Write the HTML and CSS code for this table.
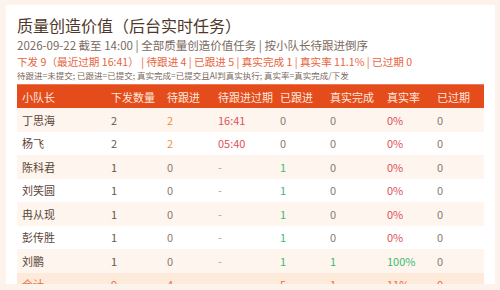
FILE: index.html
```html
<!DOCTYPE html>
<html lang="zh">
<head>
<meta charset="utf-8">
<link rel="stylesheet" href="styles.css">
</head>
<body>
<div class="card">
  <h1 class="title">质量创造价值（后台实时任务）</h1>
  <div class="meta">2026-09-22 截至 14:00 | 全部质量创造价值任务 | 按小队长待跟进倒序</div>
  <div class="summary">下发 9（最近过期 16:41） | 待跟进 4 | 已跟进 5 | 真实完成 1 | 真实率 11.1% | 已过期 0</div>
  <div class="legend">待跟进=未提交; 已跟进=已提交; 真实完成=已提交且AI判真实执行; 真实率=真实完成/下发</div>
  <table class="grid">
    <colgroup>
      <col class="c1"><col class="c2"><col class="c3"><col class="c4"><col class="c5"><col class="c6"><col class="c7"><col class="c8">
    </colgroup>
    <thead>
      <tr><th>小队长</th><th>下发数量</th><th>待跟进</th><th>待跟进过期</th><th>已跟进</th><th>真实完成</th><th>真实率</th><th>已过期</th></tr>
    </thead>
    <tbody>
      <tr><td class="name">丁思海</td><td>2</td><td class="warn">2</td><td class="red">16:41</td><td class="muted">0</td><td class="muted">0</td><td class="red">0%</td><td class="muted">0</td></tr>
      <tr><td class="name">杨飞</td><td>2</td><td class="warn">2</td><td class="red">05:40</td><td class="muted">0</td><td class="muted">0</td><td class="red">0%</td><td class="muted">0</td></tr>
      <tr><td class="name">陈科君</td><td>1</td><td class="muted">0</td><td class="dash">-</td><td class="green">1</td><td class="muted">0</td><td class="red">0%</td><td class="muted">0</td></tr>
      <tr><td class="name">刘笑圆</td><td>1</td><td class="muted">0</td><td class="dash">-</td><td class="green">1</td><td class="muted">0</td><td class="red">0%</td><td class="muted">0</td></tr>
      <tr><td class="name">冉从现</td><td>1</td><td class="muted">0</td><td class="dash">-</td><td class="green">1</td><td class="muted">0</td><td class="red">0%</td><td class="muted">0</td></tr>
      <tr><td class="name">彭传胜</td><td>1</td><td class="muted">0</td><td class="dash">-</td><td class="green">1</td><td class="muted">0</td><td class="red">0%</td><td class="muted">0</td></tr>
      <tr><td class="name">刘鹏</td><td>1</td><td class="muted">0</td><td class="dash">-</td><td class="green">1</td><td class="green">1</td><td class="green">100%</td><td class="muted">0</td></tr>
      <tr class="total"><td>合计</td><td>9</td><td>4</td><td class="dash">-</td><td>5</td><td>1</td><td>11%</td><td>0</td></tr>
    </tbody>
  </table>
</div>
</body>
</html>
```

FILE: styles.css
```css
html, body {
  margin: 0;
  padding: 0;
}
body {
  background: #fcf3ec;
  padding: 5px 5px 0 6px;
  font-family: "Noto Sans CJK SC", "DejaVu Sans", sans-serif;
  color: #5b4538;
}
.card {
  background: #ffffff;
  height: 279px;
  padding: 9px 12px 0 11px;
  box-sizing: border-box;
}
.title {
  margin: 0;
  font-weight: 400;
  font-size: 16px;
  line-height: 22px;
  color: #4f382b;
}
.meta {
  margin-top: 1px;
  font-size: 11.5px;
  line-height: 16px;
  color: #7b6a60;
}
.summary {
  margin-top: 1px;
  font-size: 10.6px;
  line-height: 16px;
  color: #e8643e;
}
.legend {
  font-size: 8.5px;
  line-height: 10px;
  color: #7b6a60;
}
.grid {
  margin-top: 4px;
  width: 100%;
  border-collapse: collapse;
  table-layout: fixed;
  font-size: 11px;
  line-height: 14px;
}
.c1 { width: 89px; }
.c2 { width: 56px; }
.c3 { width: 51px; }
.c4 { width: 62px; }
.c5 { width: 50px; }
.c6 { width: 57px; }
.c7 { width: 50px; }
.c8 { width: 52px; }
.grid th {
  background: #e44c1c;
  color: #fde9df;
  font-weight: 400;
  text-align: left;
  height: 23px;
  padding: 0 0 0 5px;
  border-top: 1px solid #ef7a55;
}
.grid td {
  height: 23.5px;
  padding: 0 0 0 5px;
  color: #6a5548;
}
.grid tbody tr:nth-child(odd) td {
  background: #fdf5ee;
}
.grid td.name { color: #5b4538; }
.grid td.muted { color: #8e7a6c; }
.grid td.warn { color: #e8913a; }
.grid td.red { color: #e0525a; }
.grid td.green { color: #3dba72; }
.grid td.dash { color: #b0a098; }
.grid tr.total td {
  background: #fdeadb;
  color: #f06c3c;
}
.grid tr.total td.dash { color: #b0a098; }
```
